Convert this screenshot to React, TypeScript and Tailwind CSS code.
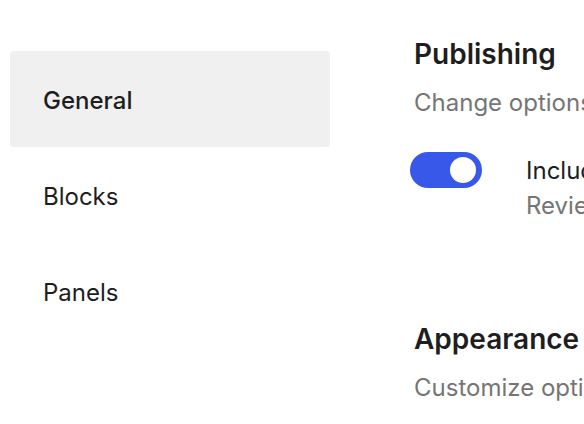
import React from "react";

const tabs = [
	{ label: "General", active: true },
	{ label: "Blocks", active: false },
	{ label: "Panels", active: false },
];

const Toggle = ({ on }: { on: boolean }) => (
	<div
		className={`relative h-[36px] w-[72px] shrink-0 rounded-full ${on ? "bg-[#3858e9]" : "bg-[#949494]"}`}
	>
		<div className="absolute right-[6px] top-[5px] h-[26px] w-[26px] rounded-full bg-white" />
	</div>
);

export default function App() {
	return (
		<div
			className="flex h-[424px] w-[584px] overflow-hidden bg-white text-[#1e1e1e]"
			style={{ fontFamily: "Inter, 'Noto Sans', sans-serif" }}
		>
			{/* sidebar tabs */}
			<nav className="flex w-[330px] shrink-0 flex-col pl-[10px] pt-[51px]">
				{tabs.map((tab) => (
					<div
						key={tab.label}
						className={`flex h-[96px] items-center rounded-[4px] px-[33px] pt-[3px] text-[24px] ${tab.active ? "bg-[#f0f0f0] font-medium" : ""}`}
					>
						{tab.label}
					</div>
				))}
			</nav>

			{/* content */}
			<main className="flex min-w-0 flex-1 flex-col whitespace-nowrap pl-[84px] pt-[36px]">
				<h2 className="text-[28px] font-semibold leading-[36px]">Publishing</h2>
				<p className="mt-[15px] text-[24px] leading-[32px] text-[#757575]">
					Change options related to the publishing flow.
				</p>
				<div className="-ml-[4px] mt-[33px] flex items-start gap-[44px]">
					<Toggle on />
					<div className="mt-[3px] flex flex-col">
						<span className="text-[24px] leading-[32px]">Include pre-publish checklist</span>
						<span className="mt-[3px] text-[24px] leading-[32px] text-[#757575]">
							Review settings, such as visibility and tags.
						</span>
					</div>
				</div>
				<h2 className="mt-[99px] text-[28px] font-semibold leading-[36px]">Appearance</h2>
				<p className="mt-[15px] text-[24px] leading-[32px] text-[#757575]">
					Customize options related to the block editor interface and editing flow.
				</p>
			</main>
		</div>
	);
}
